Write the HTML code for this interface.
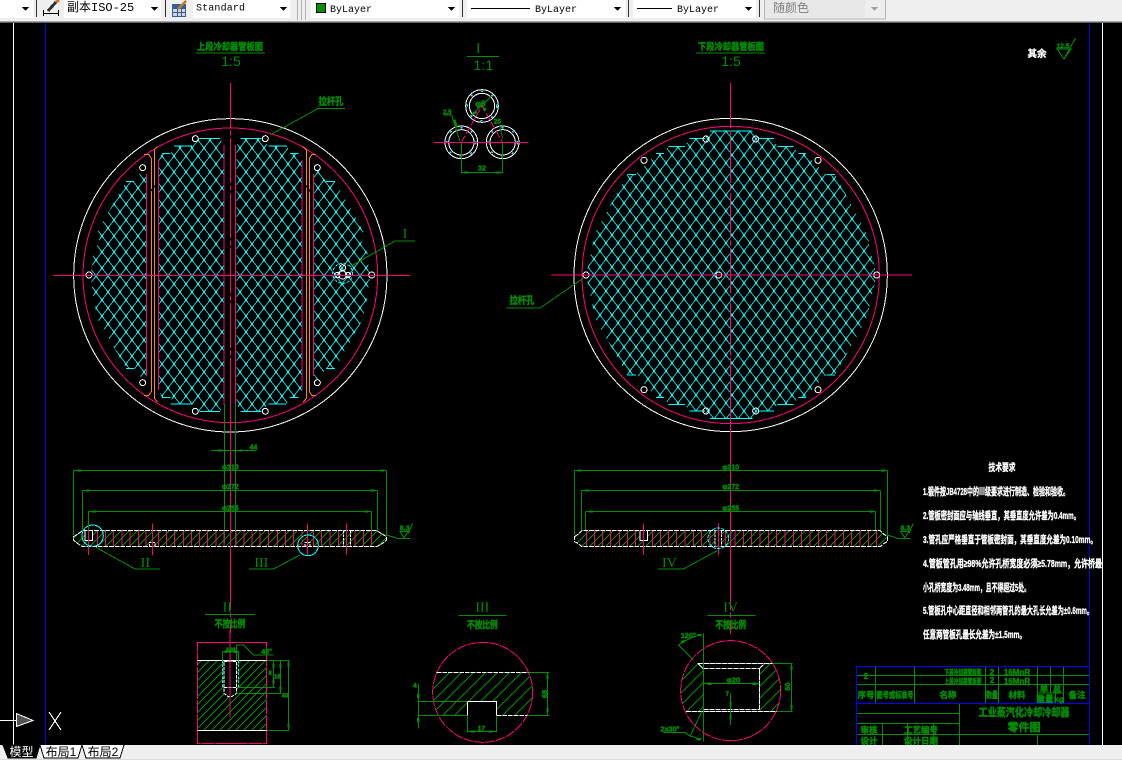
<!DOCTYPE html>
<html lang="zh">
<head>
<meta charset="utf-8">
<title>CAD</title>
<style>
html,body{margin:0;padding:0;width:1122px;height:760px;overflow:hidden;background:#000}
svg{display:block;shape-rendering:crispEdges}
text{font-family:"Liberation Sans","WenQuanYi Zen Hei","Noto Sans CJK SC",sans-serif}
.g{stroke:#008f00;fill:none}
.r{stroke:#ff0078;fill:none}
.w{stroke:#fff;fill:none}
.c{stroke:#0ff;fill:none}
.o{stroke:#ff8c00;fill:none}
.b{stroke:#00f;fill:none}
.ga{fill:#008f00;stroke:none}
.gt{fill:#008f00;font-weight:bold;text-anchor:middle;stroke:#008f00;stroke-width:.4px;vector-effect:non-scaling-stroke}
.wt{fill:#fff;font-weight:bold;stroke:#fff;stroke-width:.35px}
.rm{fill:#008f00;font-family:"Liberation Serif",serif;text-anchor:middle}
.m{font-family:"Liberation Mono",monospace;font-size:10px;fill:#000}
</style>
</head>
<body>
<svg width="1122" height="760" viewBox="0 0 1122 760" xmlns="http://www.w3.org/2000/svg">
<defs>
<pattern id="mesh" patternUnits="userSpaceOnUse" width="72" height="48">
<path d="M0 0L18 24L36 0L54 24L72 0M0 48L18 24L36 48L54 24L72 48" stroke="#0ff" stroke-width="2.6" fill="none"/>
<path d="M18 19V29M54 19V29M36 0V5M36 43V48M0 0V5M0 43V48M72 0V5M72 43V48" stroke="#0ff" stroke-width="5" fill="none"/>
</pattern>
<pattern id="h1" patternUnits="userSpaceOnUse" width="24" height="24">
<path d="M-3 27L27 -3M-3 3L3 -3M21 27L27 21" stroke="#008f00" stroke-width="3" fill="none"/>
</pattern>
<pattern id="h2" patternUnits="userSpaceOnUse" width="36" height="36">
<path d="M-3 39L39 -3M-3 3L3 -3M33 39L39 33" stroke="#008f00" stroke-width="3" fill="none"/>
</pattern>
<clipPath id="c3"><circle cx="248" cy="307" r="150"/></clipPath>
<clipPath id="c4"><circle cx="992" cy="302" r="150"/></clipPath>
</defs>

<rect width="1122" height="760" fill="#000"/>

<!-- page frame lines -->
<path class="w" d="M13.5 23V745M1102.5 23V745"/>
<path class="b" d="M45.5 23V745M1089.5 23V745"/>

<!-- LEFT PLATE -->
<g transform="translate(60,100) scale(.33333)" stroke-width="3">
<circle class="w" cx="511" cy="526" r="470"/>
<circle class="r" cx="511" cy="526" r="442"/>
<path fill="url(#mesh)" d="M258 225L246 212L222 244H198L112 395L118 425L100 460L92 525L100 590L112 655L198 805H222L248 840L258 825Z"/>
<path fill="url(#mesh)" d="M492 135L480 115H418L396 138H342L332 160H306L296 180V870L306 892H332L342 912H396L418 934H480L492 915Z"/>
<path fill="url(#mesh)" d="M530 135L542 115H604L626 138H680L690 160H716L726 180V870L716 892H690L680 912H626L604 934H542L530 915Z"/>
<path fill="url(#mesh)" d="M762 225L775 212L798 244H825L910 395L905 425L922 460L930 525L922 590L910 655L825 805H798L772 840L762 825Z"/>
<path class="c" d="M198 244H222M198 805H222M418 115H480M342 138H396M306 160H332M332 912H396M306 892H332M418 934H480M542 115H604M626 138H680M690 160H716M626 912H680M690 892H716M542 934H604M798 244H825M798 805H825"/>
<path class="r" d="M259 222V828M296 180V870M492 135V915M527 135V915M726 180V870M761 222V828"/>
<path class="o" d="M252 163H266L274 175V875L266 887H252M292 140L283 150V895L292 906M730 140L739 150V895L730 906M768 163H756L748 175V875L756 887H768" stroke-dasharray="120 6 700 6"/>
<g class="w">
<circle cx="406" cy="116" r="9"/><circle cx="616" cy="116" r="9"/><circle cx="248" cy="203" r="9"/><circle cx="772" cy="203" r="9"/>
<circle cx="248" cy="848" r="9"/><circle cx="772" cy="848" r="9"/><circle cx="406" cy="934" r="9"/><circle cx="616" cy="934" r="9"/>
<circle cx="87" cy="525" r="9"/><circle cx="935" cy="525" r="9"/>
<circle cx="848" cy="525" r="12"/><circle cx="848" cy="503" r="9"/><circle cx="832" cy="525" r="8"/><circle cx="864" cy="525" r="8"/>
</g>
<circle class="c" cx="848" cy="520" r="30" stroke-dasharray="8 5"/>
<path class="r" d="M-21 526H1050"/>
<path class="r" d="M511 -51V1450" stroke-dasharray="135 8 14 8"/>
<path class="g" d="M870 500L1005 423M630 105L775 25H855M493 912V1331M526 912V1331"/>
</g>

<!-- leader I left -->
<path class="g" d="M395 241H415"/>
<text class="rm" x="405" y="238" font-size="14">I</text>
<text class="gt" x="331" y="105" font-size="10" textLength="25" lengthAdjust="spacingAndGlyphs">拉杆孔</text>

<!-- RIGHT PLATE -->
<g transform="translate(570,115) scale(.33333)" stroke-width="3">
<circle class="w" cx="482" cy="480" r="470"/>
<circle class="r" cx="482" cy="480" r="446"/>
<path fill="url(#mesh)" d="M420 48H548L565 70H612L622 94H670L685 115H708L725 136L770 178H795L890 355L905 420L920 480L905 545L890 610L795 780H770L725 825L708 848H685L670 868H622L612 888H565L548 910H420L405 888H358L345 868H295L280 848H258L240 825L200 780H172L75 610L62 545L48 480L62 420L75 355L172 178H198L240 136L258 115H282L295 94H345L358 70H405Z"/>
<path class="c" d="M420 48H548M565 70H612M622 94H670M685 115H708M770 178H795M172 178H198M258 115H282M295 94H345M358 70H405M420 910H548M565 888H612M622 868H670M685 848H708M770 780H795M172 780H198M258 848H282M295 868H345M358 888H405"/>
<g class="w">
<circle cx="48" cy="480" r="9"/><circle cx="446" cy="480" r="9"/><circle cx="920" cy="480" r="9"/>
<circle cx="408" cy="72" r="9"/><circle cx="557" cy="72" r="9"/><circle cx="222" cy="136" r="9"/><circle cx="744" cy="136" r="9"/>
<circle cx="222" cy="824" r="9"/><circle cx="744" cy="824" r="9"/><circle cx="408" cy="888" r="9"/><circle cx="557" cy="888" r="9"/>
</g>
<path class="r" d="M-57 480H1026"/>
<path class="r" d="M482 -96V1410" stroke-dasharray="135 8 14 8"/>
<path class="g" d="M40 490L-90 579H-190"/>
</g>
<text class="gt" x="522" y="304" font-size="10" textLength="25" lengthAdjust="spacingAndGlyphs">拉杆孔</text>

<!-- titles -->
<path class="g" d="M196 53H265M696 53H765M467 56.5H499"/>
<text class="gt" x="230" y="50" font-size="9.5" textLength="66" lengthAdjust="spacingAndGlyphs">上段冷却器管板图</text>
<text x="231" y="66" fill="#008f00" font-size="14" text-anchor="middle">1:5</text>
<text class="gt" x="731" y="50" font-size="9.5" textLength="66" lengthAdjust="spacingAndGlyphs">下段冷却器管板图</text>
<text x="731" y="66" fill="#008f00" font-size="14" text-anchor="middle">1:5</text>

<!-- DETAIL I -->
<g transform="translate(420,30) scale(.33333)" stroke-width="3">
<text class="rm" x="175" y="68" font-size="42">I</text>
<text x="190" y="120" fill="#008f00" font-size="42" text-anchor="middle" textLength="60" lengthAdjust="spacing">1:1</text>
<g class="w">
<circle cx="186" cy="228" r="49"/><circle cx="186" cy="228" r="38"/>
<circle cx="124" cy="337" r="49"/><circle cx="124" cy="337" r="38"/>
<circle cx="248" cy="337" r="49"/><circle cx="248" cy="337" r="38"/>
</g>
<g class="c" stroke-dasharray="6 28" stroke-width="4">
<circle cx="186" cy="228" r="44"/><circle cx="124" cy="337" r="44"/><circle cx="248" cy="337" r="44"/>
</g>
<path class="r" d="M124 337L186 228L248 337" stroke-dasharray="24 6"/>
<path class="r" d="M40 337H326"/>
<path class="g" d="M124 337V430M248 337V430M124 427H248M70 255H95L120 335M155 255L215 198M238 285L248 325"/>
<path class="ga" d="M132 424h14v6h-14zM227 424h14v6h-14zM100 270l6 -2l8 24l-6 2zM158 247l10 -5l5 7l-10 5zM192 232l8 4l-4 8l-8 -4z"/>
<text class="gt" x="82" y="252" font-size="18">2.5</text>
<text class="gt" x="181" y="230" font-size="24">φ6</text>
<text class="gt" x="232" y="280" font-size="20">25</text>
<text class="gt" x="186" y="422" font-size="22">32</text>
</g>

<!-- LEFT SIDE VIEW -->
<g transform="translate(60,440) scale(.33333)" stroke-width="3">
<path fill="url(#h1)" d="M40 290L68 272H952L980 285V300L952 320H68L40 300Z"/>
<path class="r" d="M112 270V320M136 270V320M160 270V320M186 270V320M210 270V320M236 270V320M258 270V320M296 270V320M320 270V320M343 270V320M370 270V320M394 270V320M418 270V320M442 270V320M468 270V320M492 270V320M528 270V320M552 270V320M576 270V320M600 270V320M625 270V320M652 270V320M676 270V320M700 270V320M726 270V320M760 270V320M785 270V320M810 270V320M835 270V320M885 270V320M910 270V320M935 270V320"/>
<rect x="75" y="272" width="23" height="30" fill="#000"/>
<path class="w" d="M75 272V302H98V272"/>
<path class="w" d="M40 290L52 283L68 272H950L968 283L980 290V300L968 310L950 320H68L52 310L40 300Z" stroke-dasharray="14 3"/>
<path class="w" d="M851 272V320M872 272V320M268 320V307H285V320M735 320V307H750V320" stroke-dasharray="8 3"/>
<path class="r" d="M85 270V345M277 250V345M742 250V345M859 250V345"/>
<circle class="c" cx="98" cy="287" r="32"/>
<circle class="c" cx="744" cy="316" r="31"/>
<path class="r" d="M511 -120V580" stroke-dasharray="135 8 14 8"/>
<path class="g" d="M40 91H980M40 91V285M980 91V290M67 151H952M67 151V272M952 151V272M85 214H934M85 214V270M934 214V270M453 31H590M108 322L225 387H300M722 344L640 387H567M980 285L1012 295H1050M1020 275H1045L1032 293ZM1045 280L1058 250"/>
<path class="ga" d="M52 88h12v6h-12zM960 88h12v6h-12zM78 148h12v6h-12zM932 148h12v6h-12zM96 211h12v6h-12zM914 211h12v6h-12zM474 28h10v6h-10zM538 28h10v6h-10z"/>
<text class="gt" x="511" y="88" font-size="21">φ310</text>
<text class="gt" x="511" y="147" font-size="21">φ272</text>
<text class="gt" x="511" y="212" font-size="21">φ255</text>
<text class="gt" x="580" y="28" font-size="21">44</text>
<text class="gt" x="1034" y="272" font-size="21">8.3</text>
<text class="rm" x="256" y="381" font-size="42">II</text>
<text class="rm" x="604" y="381" font-size="42">III</text>
</g>

<!-- RIGHT SIDE VIEW -->
<g transform="translate(560,440) scale(.33333)" stroke-width="3">
<path fill="url(#h1)" d="M43 290L65 272H961L982 290V300L961 320H65L43 305Z"/>
<path class="r" d="M80 270V320M104 270V320M128 270V320M152 270V320M178 270V320M202 270V320M226 270V320M277 270V320M302 270V320M325 270V320M350 270V320M375 270V320M400 270V320M425 270V320M450 270V320M497 270V320M525 270V320M550 270V320M575 270V320M600 270V320M625 270V320M650 270V320M675 270V320M700 270V320M725 270V320M750 270V320M775 270V320M800 270V320M825 270V320M850 270V320M875 270V320M900 270V320M925 270V320M950 270V320"/>
<rect x="240" y="272" width="23" height="30" fill="#000"/>
<path class="w" d="M240 272V302H263V272"/>
<path class="w" d="M43 290L54 283L65 272H961L972 283L982 290V305L972 310L961 320H65L54 310L43 305Z" stroke-dasharray="14 3"/>
<rect x="465" y="272" width="20" height="48" fill="#000"/>
<path class="w" d="M465 272V320M485 272V320" stroke-dasharray="8 3"/>
<path class="r" d="M250 250V345M475 250V345"/>
<circle class="c" cx="475" cy="295" r="31" stroke-dasharray="10 4"/>
<path class="r" d="M511 -120V580" stroke-dasharray="135 8 14 8"/>
<path class="g" d="M43 91H982M43 91V285M982 91V290M64 151H961M64 151V272M961 151V272M76 214H946M76 214V270M946 214V270M472 332L370 387H294M982 285L1014 295H1050M1022 275H1047L1034 293ZM1047 280L1060 250"/>
<path class="ga" d="M52 88h12v6h-12zM963 88h12v6h-12zM75 148h12v6h-12zM939 148h12v6h-12zM87 211h12v6h-12zM927 211h12v6h-12z"/>
<text class="gt" x="512" y="88" font-size="21">φ310</text>
<text class="gt" x="512" y="147" font-size="21">φ272</text>
<text class="gt" x="512" y="212" font-size="21">φ255</text>
<text class="gt" x="1036" y="272" font-size="21">8.3</text>
<text class="rm" x="328" y="381" font-size="42">IV</text>
</g>

<!-- DETAIL II -->
<g transform="translate(0,590) scale(.33333)" stroke-width="3">
<text class="rm" x="682" y="64" font-size="42">II</text>
<path class="g" d="M615 73H765"/>
<text class="gt" x="690" y="112" font-size="30" textLength="92" lengthAdjust="spacingAndGlyphs">不按比例</text>
<path fill="url(#h1)" d="M592 211H672V310L690 320L710 310V211H800V421H592Z"/>
<path class="r" d="M592 157H800V460H592Z" stroke-dasharray="96 3 40 3"/>
<path class="w" d="M592 211H800M592 421H800"/>
<path class="w" d="M672 215H710V310L695 320H685L672 310ZM672 292H710" stroke-dasharray="10 3"/>
<path class="c" d="M667 211V292M716 211V292" stroke-dasharray="8 4"/>
<path class="r" d="M690 120V382"/>
<path class="g" d="M668 185V211M716 185V211M668 185H716M710 165H730L760 195H820M710 165V211M710 292H825M710 310H845M800 421H868M800 211H868M820 211V292M842 211V310M866 211V421"/>
<path class="ga" d="M673 182h10v7h-10zM702 182h10v7h-10zM817 222h7v12h-7zM817 270h7v12h-7zM838 222h7v12h-7zM838 290h7v12h-7zM862 218h7v12h-7zM862 400h7v12h-7z"/>
<text class="gt" x="693" y="188" font-size="21">M8</text>
<text class="gt" x="800" y="192" font-size="21">45°</text>
<text class="gt" x="810" y="255" font-size="18">8</text>
<text class="gt" x="832" y="265" font-size="18">16</text>
<text class="gt" x="855" y="322" font-size="18">40</text>
</g>

<!-- DETAIL III, IV -->
<g transform="translate(400,590) scale(.33333)" stroke-width="3">
<text class="rm" x="247" y="64" font-size="42">III</text>
<path class="g" d="M175 76H320"/>
<text class="gt" x="247" y="115" font-size="30" textLength="92" lengthAdjust="spacingAndGlyphs">不按比例</text>
<path fill="url(#h2)" clip-path="url(#c3)" d="M98 247H398V376H290V334H202V376H98Z"/>
<circle class="r" cx="248" cy="307" r="150" stroke-dasharray="30 3"/>
<path class="w" d="M110 247H385M290 376H382" stroke-dasharray="14 3"/>
<path class="w" d="M202 376V334H290V376"/>
<path class="g" d="M385 247H448M382 376H448M443 247V376M55 334H202M55 376H202M55 280V415M202 376V428M290 376V428M202 424H290"/>
<path class="ga" d="M439 255h7v14h-7zM439 354h7v14h-7zM51 312h7v12h-7zM51 384h7v12h-7zM212 421h13v7h-13zM266 421h13v7h-13z"/>
<text class="gt" x="244" y="421" font-size="20">17</text>
<text class="gt" x="45" y="293" font-size="20">4</text>
<text class="gt" transform="translate(441,312) rotate(-90)" font-size="22">68</text>

<text class="rm" x="992" y="64" font-size="42">IV</text>
<path class="g" d="M922 76H1067"/>
<text class="gt" x="992" y="115" font-size="30" textLength="92" lengthAdjust="spacingAndGlyphs">不按比例</text>
<path fill="url(#h2)" clip-path="url(#c4)" d="M843 220H893L910 236V364H843ZM1078 236L1095 220H1145V364H1078Z"/>
<circle class="r" cx="992" cy="302" r="150" stroke-dasharray="30 3"/>
<path class="w" d="M893 220H1117M910 236H1078M910 358H1078M858 364H1130M893 220L910 236M1078 236L1095 220M1078 236V358" stroke-dasharray="16 2"/>
<path class="w" d="M910 236V364"/>
<path class="g" d="M1117 220H1178M1130 364H1178M1174 220V364M910 281H1078M991 310V405M910 130V455M835 165L880 210M835 165Q870 140 905 135M790 428H855L870 438L905 448M870 440L905 365"/>
<path class="ga" d="M1171 228h7v12h-7zM1171 345h7v12h-7zM922 278h12v7h-12zM1057 278h12v7h-12zM988 336h7v14h-7zM988 375h7v14h-7zM893 132h12v6h-12zM842 155l10 -6l4 6l-10 6zM890 444h12v7h-12z"/>
<text class="gt" x="1000" y="278" font-size="22">φ20</text>
<text class="gt" x="982" y="318" font-size="18">7</text>
<text class="gt" transform="translate(1170,290) rotate(-90)" font-size="22">60</text>
<text class="gt" x="865" y="144" font-size="22">120°</text>
<text class="gt" x="810" y="424" font-size="22">2x30°</text>
</g>

<!-- roughness note -->
<text class="wt" x="1037" y="57" font-size="9.5" text-anchor="middle">其余</text>
<path class="g" d="M1056 49H1071L1064 59L1057 49M1064 59L1075.5 38"/>
<text class="gt" x="1063" y="48" font-size="6.5">12.5</text>

<!-- technical requirements -->
<g>
<text class="wt" x="1002" y="471" font-size="10" text-anchor="middle" textLength="27" lengthAdjust="spacingAndGlyphs">技术要求</text>
<text class="wt" x="923" y="495" font-size="10.5" textLength="146" lengthAdjust="spacingAndGlyphs">1.锻件按JB4728中的Ⅲ级要求进行制造、检验和验收。</text>
<text class="wt" x="923" y="519" font-size="10.5" textLength="157" lengthAdjust="spacingAndGlyphs">2.管板密封面应与轴线垂直，其垂直度允许差为0.4mm。</text>
<text class="wt" x="923" y="543" font-size="10.5" textLength="174" lengthAdjust="spacingAndGlyphs">3.管孔应严格垂直于管板密封面，其垂直度允差为0.10mm。</text>
<text class="wt" x="923" y="567" font-size="10.5" textLength="179" lengthAdjust="spacingAndGlyphs">4.管板管孔用≥98%允许孔桥宽度必须≥5.78mm，允许桥最</text>
<text class="wt" x="923" y="591" font-size="10.5" textLength="107" lengthAdjust="spacingAndGlyphs">小孔桥宽度为3.48mm，且不得超过5处。</text>
<text class="wt" x="923" y="614" font-size="10.5" textLength="170" lengthAdjust="spacingAndGlyphs">5.管板孔中心距直径和相邻两管孔的最大孔长允差为±0.6mm。</text>
<text class="wt" x="923" y="638" font-size="10.5" textLength="103" lengthAdjust="spacingAndGlyphs">任意两管板孔最长允差为±1.5mm。</text>
</g>

<!-- title block -->
<path class="g" d="M856 675.5H1089M875.5 684.5H1089M856 684.5H1089M875.5 666V703M914.5 666V703M985.5 666V703M998.5 666V703M1037.5 666V703M1050.5 666V693M1063.5 666V703M1037 693H1063M1055.5 693V703M959.5 703V745M856 713.5H959M856 723.5H959M856 734.5H1089M882.5 723V745M907.5 723V745M933.5 723V745M1037.5 734V745"/>
<path class="b" d="M856.5 666V745M856 666.5H1089M856 703.5H1089"/>
<g font-size="8">
<text class="gt" x="866" y="679" font-size="8">2</text>
<text class="gt" x="963" y="675" font-size="7.5" textLength="37" lengthAdjust="spacingAndGlyphs">下段冷却器管板图</text>
<text class="gt" x="963" y="684" font-size="7.5" textLength="37" lengthAdjust="spacingAndGlyphs">上段冷却器管板图</text>
<text class="gt" x="992" y="675" font-size="8">2</text><text class="gt" x="992" y="683" font-size="8">2</text>
<text class="gt" x="1017" y="675" font-size="8">16MnR</text><text class="gt" x="1017" y="684" font-size="8">16MnR</text>
<text class="gt" x="866" y="698" font-size="8.5">序号</text>
<text class="gt" x="895" y="698" font-size="8.5" textLength="37" lengthAdjust="spacingAndGlyphs">图号或标准号</text>
<text class="gt" x="948" y="698" font-size="8.5">名称</text>
<text class="gt" x="992" y="698" font-size="8.5" textLength="12" lengthAdjust="spacingAndGlyphs">数量</text>
<text class="gt" x="1017" y="698" font-size="8.5">材料</text>
<text class="gt" x="1044" y="692" font-size="8.5">单</text>
<text class="gt" x="1057" y="692" font-size="8.5">总</text>
<text class="gt" x="1045" y="702" font-size="8.5">重量</text>
<text class="gt" x="1059" y="702" font-size="8.5">kg</text>
<text class="gt" x="1077" y="698" font-size="8.5">备注</text>
<text class="gt" x="1024" y="716" font-size="11" textLength="91" lengthAdjust="spacingAndGlyphs">工业蒸汽化冷却冷却器</text>
<text class="gt" x="1024" y="731" font-size="11">零件图</text>
<text class="gt" x="869" y="733" font-size="8.5">审核</text>
<text class="gt" x="921" y="733" font-size="8.5">工艺编号</text>
<text class="gt" x="869" y="744" font-size="8.5">设计</text>
<text class="gt" x="921" y="744" font-size="8.5">设计日期</text>
</g>

<!-- UCS icon -->
<path class="w" d="M0 720.5H16"/>
<path d="M16.5 713.5L33 720.5L16.5 726.5Z" fill="#555" stroke="#fff"/>
<path class="w" d="M49 712L61 730M61 712L49 730"/>

<!-- bottom tabs -->
<rect x="0" y="745" width="1122" height="15" fill="#efefef"/>
<path d="M3 745L8 758H36L40 745Z" fill="#000" stroke="#000"/>
<path d="M40 745L44 758H78L82 745" fill="#fff" stroke="#000"/>
<path d="M82 745L86 758H120L124 745" fill="#fff" stroke="#000"/>
<text x="21.5" y="756" fill="#fff" font-size="12" text-anchor="middle">模型</text>
<text x="61" y="756" fill="#000" font-size="12" text-anchor="middle">布局1</text>
<text x="103" y="756" fill="#000" font-size="12" text-anchor="middle">布局2</text>
<path d="M0 759.5H1122" stroke="#dcdcdc" fill="none"/>

<!-- toolbar -->
<rect x="0" y="0" width="1122" height="23" fill="#efefef"/>
<path d="M0 21.5H1122" stroke="#a8a8a8" fill="none"/>
<path d="M0 22.5H1122" stroke="#606060" fill="none"/>
<g fill="#fff">
<rect x="0" y="0" width="33" height="18"/>
<rect x="64" y="0" width="97" height="18"/>
<rect x="193" y="0" width="97" height="18"/>
<rect x="311" y="0" width="148" height="18"/>
<rect x="467" y="0" width="158" height="18"/>
<rect x="633" y="0" width="123" height="18"/>
</g>
<path d="M36.5 0V17M165.5 0V17M462.5 0V17M628.5 0V17M759.5 0V17" stroke="#303030" fill="none"/>
<path d="M297.5 0V20M301.5 0V20M305.5 0V20" stroke="#b0b0b0" fill="none"/>
<rect x="764.5" y="-2" width="121" height="21" fill="#eee" stroke="#b4b4b4"/>
<rect x="765" y="0" width="100" height="18" fill="#e8e8e8"/>
<g fill="#000">
<path d="M22 7H29L25.5 11Z"/><path d="M151 7H158L154.500 11Z"/><path d="M280 7H287L283.500 11Z"/><path d="M448 7H455L451.500 11Z"/><path d="M614 7H621L617.500 11Z"/><path d="M745 7H752L748.500 11Z"/>
</g>
<path d="M871 7H878L874.500 11Z" fill="#a0a0a0"/>
<!-- dim style icon -->
<path d="M43.500 10V16M58.500 10V16M44 13.500H58" stroke="#000" fill="none"/>
<path d="M48 11L56 2" stroke="#333" stroke-width="3" fill="none"/>
<path d="M56 2L59 0" stroke="#c87a20" stroke-width="3" fill="none"/>
<!-- text style icon -->
<rect x="172.500" y="4.500" width="13" height="12" fill="#cdd6e6" stroke="#3a5a8c"/>
<path d="M173 8.500H185M173 12.500H185M177.500 5V16M181.500 5V16" stroke="#3a5a8c" fill="none"/>
<rect x="173" y="5" width="12" height="3" fill="#2f5fa8"/>
<path d="M178 9L186 1" stroke="#c87a20" stroke-width="2.500" fill="none"/>
<!-- toolbar text -->
<text x="67" y="11" font-size="12" fill="#000" style="font-family:'Liberation Mono','Noto Sans CJK SC',monospace">副本ISO-25</text>
<text x="196" y="10.500" class="m" textLength="49">Standard</text>
<rect x="316.500" y="3.500" width="9" height="9" fill="#008f00" stroke="#000"/>
<text x="330" y="12" class="m">ByLayer</text>
<path d="M471 8.500H530" stroke="#000" fill="none"/>
<text x="535" y="12" class="m">ByLayer</text>
<path d="M637 8.500H672" stroke="#000" fill="none"/>
<text x="677" y="12" class="m">ByLayer</text>
<text x="773" y="12" font-size="12" fill="#808080">随颜色</text>
</svg>
</body>
</html>
